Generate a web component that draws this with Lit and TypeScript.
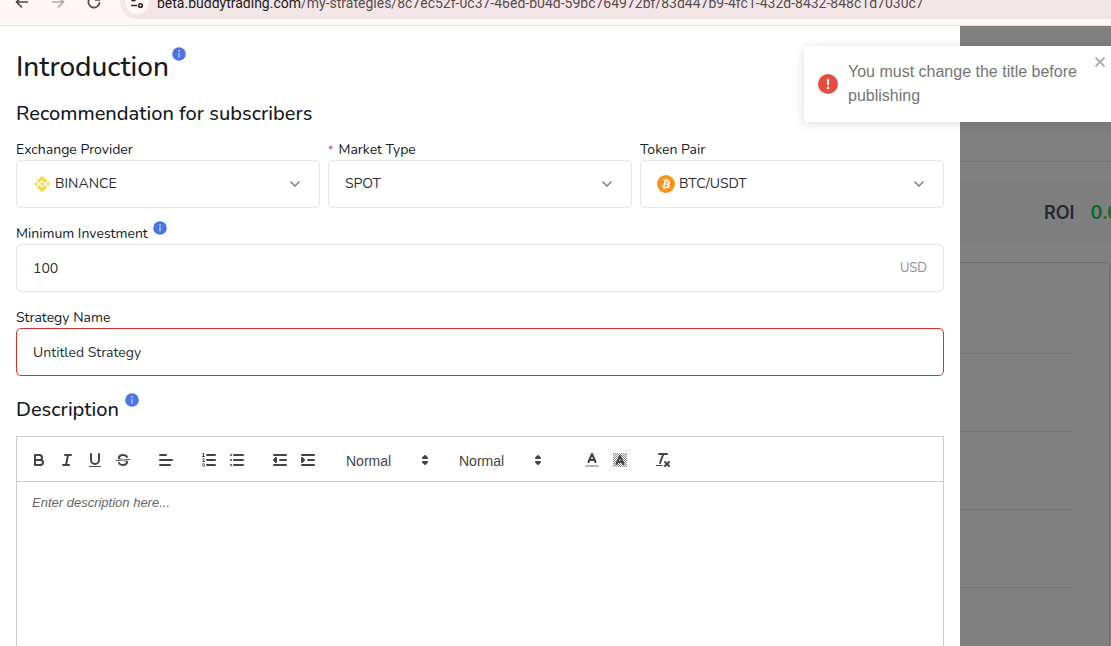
import { LitElement, html, css, svg, type TemplateResult } from "lit";
import { customElement } from "lit/decorators.js";

const line = (x1: number, y1: number, x2: number, y2: number, cls = "s") =>
  svg`<line class=${cls} x1=${x1} y1=${y1} x2=${x2} y2=${y2}></line>`;

const hatch = [5, 7, 9, 11, 13, 15, 17, 19, 21, 23, 25, 27, 29, 31].map((n) => {
  const lo = Math.max(2, n - 16);
  const hi = Math.min(16, n - 2);
  return line(lo, n - lo, hi, n - hi, "h");
});

const glyphs: Record<string, TemplateResult> = {
  bold: svg`<path class="s" d="M5,4H9.5a2.5,2.5,0,0,1,0,5H5Z"></path><path class="s" d="M5,9h5.5a2.5,2.5,0,0,1,0,5H5Z"></path>`,
  italic: svg`${line(7, 4, 13, 4)}${line(5, 14, 11, 14)}${line(8, 14, 10, 4)}`,
  underline: svg`<path class="s" d="M5,3V9a4,4,0,0,0,8,0V3"></path><rect class="f" x="3" y="15" width="12" height="1" rx="0.5"></rect>`,
  strike: svg`${line(15.5, 8.5, 2.5, 9.5, "t")}
    <path class="f" d="M9.007,8C6.542,7.791,6,7.519,6,6.5,6,5.792,7.283,5,9,5c1.571,0,2.765.679,2.969,1.309a1,1,0,0,0,1.9-.617C13.356,4.106,11.354,3,9,3,6.2,3,4,4.538,4,6.5a3.2,3.2,0,0,0,.5,1.843Z"></path>
    <path class="f" d="M8.984,10C11.457,10.208,12,10.479,12,11.5c0,.708-1.283,1.5-3,1.5-1.571,0-2.765-.679-2.969-1.309a1,1,0,1,0-1.9.617C4.644,13.894,6.646,15,9,15c2.8,0,5-1.538,5-3.5a3.2,3.2,0,0,0-.5-1.843Z"></path>`,
  align: svg`${line(3, 9, 15, 9)}${line(3, 14, 13, 14)}${line(3, 4, 9, 4)}`,
  ordered: svg`${line(7, 4, 15, 4)}${line(7, 9, 15, 9)}${line(7, 14, 15, 14)}${line(2.5, 5.5, 4.5, 5.5, "t")}
    <path class="f" d="M3.5,6A.5.5,0,0,1,3,5.5V3.085l-.276.138A.5.5,0,0,1,2.053,3c-.124-.247-.023-.324.224-.447l1-.5A.5.5,0,0,1,4,2.5v3A.5.5,0,0,1,3.5,6Z"></path>
    <path class="t" d="M4.5,10.5h-2c0-.234,1.85-1.076,1.85-2.234A.959.959,0,0,0,2.5,8.156"></path>
    <path class="t" d="M2.5,14.846a.959.959,0,0,0,1.85-.109A.7.7,0,0,0,3.75,14a.688.688,0,0,0,.6-.736.959.959,0,0,0-1.85-.109"></path>`,
  bullet: svg`${line(6, 4, 15, 4)}${line(6, 9, 15, 9)}${line(6, 14, 15, 14)}${line(3, 4, 3, 4)}${line(3, 9, 3, 9)}${line(3, 14, 3, 14)}`,
  outdent: svg`${line(3, 14, 15, 14)}${line(3, 4, 15, 4)}${line(9, 9, 15, 9)}<polygon class="s f" points="5 7 5 11 3 9"></polygon>`,
  indent: svg`${line(3, 14, 15, 14)}${line(3, 4, 15, 4)}${line(9, 9, 15, 9)}<polygon class="s f" points="3 7 3 11 5 9"></polygon>`,
  updown: svg`<polygon class="s f" points="7 11 9 13 11 11"></polygon><polygon class="s f" points="7 7 9 5 11 7"></polygon>`,
  color: svg`${line(3, 15, 15, 15, "s faint")}<polyline class="s" points="5.5 11 9 3 12.5 11"></polyline>${line(11.63, 9, 6.38, 9)}`,
  background: svg`${hatch}<polyline class="s" points="5.5 13 9 5 12.5 13"></polyline>${line(11.63, 11, 6.38, 11)}`,
  clean: svg`${line(5, 3, 13, 3)}${line(6, 12, 9.35, 3)}${line(11, 11, 15, 15)}${line(15, 11, 11, 15)}<rect class="f" x="2" y="14" width="7" height="1" rx="0.5"></rect>`,
};

const glyph = (name: string) =>
  html`<svg class="glyph" viewBox="0 0 18 18" aria-hidden="true">${glyphs[name]}</svg>`;

const info = html`<svg class="info" viewBox="0 0 14 14" role="img" aria-label="Info">
  <circle cx="7" cy="7" r="6.8" fill="#4a73e8"></circle>
  <path d="M7 6v4.6" stroke="#c3d1fa" stroke-width="1.4"></path>
  <circle cx="7" cy="4" r="0.9" fill="#c3d1fa"></circle>
</svg>`;

const chevron = html`<svg class="chevron" viewBox="0 0 12 12" aria-hidden="true">
  <path d="M1.5 3.5 6 8l4.5-4.5" fill="none" stroke="#777" stroke-width="1.3"></path>
</svg>`;

const binance = html`<svg class="coin" viewBox="0 0 18 18" aria-hidden="true">
  <g fill="#fdd535" transform="translate(1 1)">
    <path d="M5.1 7 8 4.1 10.9 7l2.3-2.2L8 0 2.8 4.8zM5.1 9 8 11.9 10.9 9l2.3 2.2L8 16l-5.2-4.8z"></path>
    <path d="m0 8 1.9-1.9L3.8 8 1.9 9.9zM12.2 8l1.9-1.9L16 8l-1.9 1.9zM6.1 8 8 6.1 9.9 8 8 9.9z"></path>
  </g>
</svg>`;

const bitcoin = html`<svg class="coin" viewBox="0 0 32 32" aria-hidden="true">
  <circle cx="16" cy="16" r="16" fill="#f7931a"></circle>
  <path fill="#fff" d="M23.189 14.02c.314-2.096-1.283-3.223-3.465-3.975l.708-2.84-1.728-.43-.69 2.765c-.454-.114-.92-.22-1.385-.326l.695-2.783L15.596 6l-.708 2.839c-.376-.086-.746-.17-1.104-.26l.002-.009-2.384-.595-.46 1.846s1.283.294 1.256.312c.7.175.826.638.805 1.006l-.806 3.235c.048.012.11.03.18.057l-.183-.045-1.13 4.532c-.086.212-.303.531-.793.41.018.025-1.256-.313-1.256-.313l-.858 1.978 2.25.561c.418.105.828.215 1.231.318l-.715 2.872 1.727.43.708-2.84c.472.127.93.245 1.378.357l-.706 2.828 1.728.43.715-2.866c2.948.558 5.164.333 6.097-2.333.752-2.146-.037-3.385-1.588-4.192 1.13-.26 1.98-1.003 2.207-2.538zm-3.95 5.538c-.533 2.147-4.148.986-5.32.695l.95-3.805c1.172.293 4.929.872 4.37 3.11zm.535-5.569c-.487 1.953-3.495.96-4.47.717l.86-3.45c.975.243 4.118.696 3.61 2.733z"></path>
</svg>`;

@customElement("app-root")
export class AppRoot extends LitElement {
  static styles = css`
    :host {
      display: flex;
      flex-direction: column;
      position: relative;
      height: 100vh;
      overflow: hidden;
      background: #fff;
      color: #141a26;
      font: 14px/22px "Nunito", "Open Sans", "Noto Sans", sans-serif;
    }
    * { box-sizing: border-box; }
    button, input, select, textarea { font: inherit; color: inherit; margin: 0; }
    button { border: 0; background: none; padding: 0; }

    .browser {
      flex: none;
      display: flex;
      align-items: flex-end;
      height: 26px;
      padding-bottom: 6px;
      border-bottom: 1px solid #efdedd;
      background: #fff7f6;
      overflow: hidden;
    }
    .nav { flex: none; display: flex; gap: 4px; padding: 0 10px 0 6px; }
    .nav button { display: grid; place-items: center; width: 32px; height: 34px; color: #574544; }
    .nav button:disabled { color: #b5a8a8; }
    .nav svg { width: 16px; height: 16px; fill: none; stroke: currentColor; stroke-width: 1.7; }
    .omnibox {
      flex: 1;
      min-width: 0;
      display: flex;
      align-items: center;
      gap: 8px;
      height: 34px;
      padding-left: 5px;
      border-radius: 17px 0 0 17px;
      background: #f2e6e6;
    }
    .site { flex: none; display: grid; place-items: center; width: 24px; height: 24px; border-radius: 50%; background: #fff7f6; }
    .site svg { width: 14px; height: 14px; fill: none; stroke: #33292a; stroke-width: 1.6; }
    .url {
      flex: 1;
      min-width: 0;
      padding-top: 2px;
      color: #5b4d4e;
      font: 14px/20px "Roboto", "Noto Sans", sans-serif;
    }
    .url b { font-weight: 400; color: #1f1a1b; }

    .page { flex: 1; min-height: 0; display: grid; grid-template-columns: minmax(0, 960px) minmax(0, 1fr); }
    .drawer { display: flex; flex-direction: column; min-height: 0; padding: 24px 16px 0; background: #fff; }
    h1, h2 { display: flex; margin: 0; font-weight: 500; }
    h1 { gap: 3px; font-size: 28px; line-height: 34px; }
    h2 { gap: 6px; font-size: 20px; line-height: 28px; }
    .recommend { margin: 16px 0 10px; }
    .info { flex: none; width: 14px; height: 14px; }
    h1 .info, h2 .info { margin-top: -3px; }
    .trio { display: grid; grid-template-columns: repeat(3, minmax(0, 1fr)); gap: 8px; }
    .field { margin-bottom: 14px; }
    .label { display: flex; gap: 5px; height: 22px; line-height: 24px; }
    .label .info { margin-top: -1px; }
    .star { color: #d9363e; font-size: 12px; }
    .box {
      display: flex;
      align-items: center;
      gap: 4px;
      height: 48px;
      padding: 0 16px;
      border: 1px solid #e6e6e6;
      border-radius: 5px;
      color: #2a2f36;
    }
    .box.error { border-color: #d92f2f; }
    .box input, .box select { flex: 1; min-width: 0; height: 30px; border: 0; padding: 0; outline: 0; background: none; appearance: none; }
    .coin { flex: none; width: 18px; height: 18px; }
    .chevron { flex: none; width: 12px; height: 12px; margin-right: 2px; }
    .unit { color: #8c8c8c; font-size: 13px; }
    .about { margin: 6px 0 12px; }

    .editor { flex: 1; min-height: 0; display: flex; flex-direction: column; border: 1px solid #ccc; border-bottom: 0; color: #444; font-family: "Liberation Sans", Arial, sans-serif; }
    .tools { flex: none; display: flex; gap: 15px; padding: 11px 8px 9px; border-bottom: 1px solid #ccc; }
    .group { display: flex; }
    .group button { width: 28px; height: 24px; padding: 3px 5px; }
    .glyph { display: block; width: 18px; height: 18px; overflow: visible; }
    .pick { display: flex; align-items: center; width: 98px; height: 24px; padding: 0 1px 0 9px; }
    .pick select { flex: 1; min-width: 0; height: 24px; border: 0; padding: 2px 0 0; background: none; appearance: none; }
    .tint { margin-left: 15px; }
    .s { fill: none; stroke: #444; stroke-width: 2; stroke-linecap: round; stroke-linejoin: round; }
    .t { fill: none; stroke: #444; stroke-width: 1; stroke-linecap: round; stroke-linejoin: round; }
    .h { stroke: #444; stroke-width: 0.6; }
    .f { fill: #444; }
    .faint { opacity: 0.4; }
    textarea {
      flex: 1;
      min-height: 0;
      border: 0;
      padding: 12px 15px;
      outline: 0;
      resize: none;
      background: none;
      font-size: 13px;
      line-height: 18px;
    }
    textarea::placeholder { color: #666; font-style: italic; }

    .behind { display: flex; flex-direction: column; min-width: 0; overflow: hidden; background: #808080; }
    .head { flex: none; height: 136px; border-bottom: 1px solid #747478; }
    .stats {
      flex: none;
      display: flex;
      align-items: center;
      gap: 16px;
      height: 60px;
      margin-top: 20px;
      padding: 2px 0 0 84px;
      background: #7e7e7e;
      color: #252932;
      font: 600 18px/24px "Inter", sans-serif;
    }
    .gain { color: #066a24; }
    .chart { flex: 1; margin: 20px 1px 0 0; padding: 13px 36px 0 0; border: 1px solid #6f6f74; border-width: 1px 1px 0 0; border-radius: 0 5px 0 0; }
    .rule { height: 78px; border-bottom: 1px solid #747474; }

    .toast {
      position: absolute;
      top: 46px;
      right: 0;
      display: flex;
      align-items: center;
      gap: 10px;
      width: 307px;
      min-height: 76px;
      padding: 14px 30px 14px 14px;
      border-radius: 4px 0 0 4px;
      background: #fff;
      box-shadow: 0 1px 10px rgba(0, 0, 0, 0.1), 0 2px 15px rgba(0, 0, 0, 0.05);
      color: #757575;
      font: 16px/24px "Liberation Sans", Arial, sans-serif;
    }
    .toast p { margin: 0; }
    .alert { flex: none; width: 20px; height: 20px; }
    .close { position: absolute; top: 9px; right: 4px; width: 14px; height: 14px; }
    .close svg { display: block; width: 14px; height: 14px; }
  `;

  private tool(name: string) {
    return html`<button type="button" aria-label=${name}>${glyph(name)}</button>`;
  }

  private picker(label: string) {
    return html`<div class="pick">
      <select aria-label=${label}><option>Normal</option></select>${glyph("updown")}
    </div>`;
  }

  private choice(id: string, label: string, value: string, icon?: TemplateResult, required = false) {
    return html`<div class="field">
      <label class="label" for=${id}>${required ? html`<span class="star">*</span>` : ""}${label}</label>
      <div class="box">${icon ?? ""}<select id=${id}><option>${value}</option></select>${chevron}</div>
    </div>`;
  }

  render() {
    return html`
      <header class="browser">
        <nav class="nav">
          <button aria-label="Back"><svg viewBox="0 0 16 16"><path d="M14 8H3M8 2.5 2.5 8 8 13.5"></path></svg></button>
          <button aria-label="Forward" disabled><svg viewBox="0 0 16 16"><path d="M2 8h11M8 2.5 13.5 8 8 13.5"></path></svg></button>
          <button aria-label="Reload"><svg viewBox="0 0 16 16"><path d="M13.6 8A5.6 5.6 0 1 1 12 4l1.5 2M13.5 1.5V6h-4.5"></path></svg></button>
        </nav>
        <div class="omnibox">
          <span class="site"><svg viewBox="0 0 14 14"><circle cx="3.5" cy="4" r="1.8"></circle><path d="M7 4h6M1 10.5h6"></path><circle cx="10.5" cy="10.5" r="1.8"></circle></svg></span>
          <span class="url"><b>beta.buddytrading.com</b>/my-strategies/8c7ec52f-0c37-46ed-b04d-59bc764972bf/83d447b9-4fc1-432d-8432-848c1d7030c7</span>
        </div>
      </header>
      <div class="page">
        <main class="drawer">
          <h1>Introduction ${info}</h1>
          <h2 class="recommend">Recommendation for subscribers</h2>
          <div class="trio">
            ${this.choice("exchange", "Exchange Provider", "BINANCE", binance)}
            ${this.choice("market", "Market Type", "SPOT", undefined, true)}
            ${this.choice("pair", "Token Pair", "BTC/USDT", bitcoin)}
          </div>
          <div class="field">
            <label class="label" for="minimum">Minimum Investment ${info}</label>
            <div class="box"><input id="minimum" value="100" /><span class="unit">USD</span></div>
          </div>
          <div class="field">
            <label class="label" for="name">Strategy Name</label>
            <div class="box error"><input id="name" value="Untitled Strategy" aria-invalid="true" /></div>
          </div>
          <h2 class="about">Description ${info}</h2>
          <section class="editor">
            <div class="tools">
              <div class="group">${["bold", "italic", "underline", "strike"].map((n) => this.tool(n))}</div>
              <div class="group">${this.tool("align")}</div>
              <div class="group">${["ordered", "bullet"].map((n) => this.tool(n))}</div>
              <div class="group">${["outdent", "indent"].map((n) => this.tool(n))}</div>
              ${this.picker("Text size")}${this.picker("Heading")}
              <div class="group tint">${["color", "background"].map((n) => this.tool(n))}</div>
              <div class="group">${this.tool("clean")}</div>
            </div>
            <textarea aria-label="Description" placeholder="Enter description here..."></textarea>
          </section>
        </main>
        <aside class="behind">
          <div class="head"></div>
          <div class="stats"><span>ROI</span><span class="gain">0.00%</span></div>
          <div class="chart">${[1, 2, 3, 4].map(() => html`<div class="rule"></div>`)}</div>
        </aside>
      </div>
      <div class="toast" role="alert">
        <svg class="alert" viewBox="0 0 20 20" aria-hidden="true">
          <circle cx="10" cy="10" r="10" fill="#e74c3c"></circle>
          <path d="M8.8 4.8h2.4l-.3 6.4H9.1z" fill="#fff"></path>
          <circle cx="10" cy="13.9" r="1.3" fill="#fff"></circle>
        </svg>
        <p>You must change the title before publishing</p>
        <button class="close" aria-label="Close"><svg viewBox="0 0 14 14"><path d="m2.5 2.5 9 9m0-9-9 9" stroke="#b0b0b0" stroke-width="2"></path></svg></button>
      </div>
    `;
  }
}
